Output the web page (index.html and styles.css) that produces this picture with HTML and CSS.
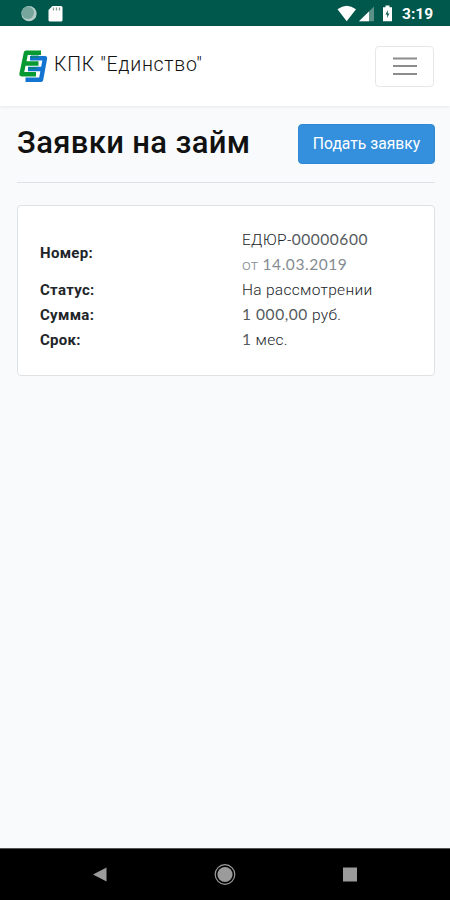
FILE: index.html
```html
<!DOCTYPE html>
<html lang="ru">
<head>
  <meta charset="UTF-8">
  <meta name="viewport" content="width=device-width, initial-scale=1.0">
  <title>КПК "Единство"</title>
  <link rel="stylesheet" href="styles.css">
</head>
<body>
  <div class="status-bar">
    <svg class="status-left" width="44" height="26" viewBox="0 0 44 26">
      <circle cx="9" cy="13.7" r="7.6" fill="#b5cdc8"/>
      <circle cx="7.8" cy="12.8" r="6.2" fill="#76a69c"/>
      <path d="M32.500 6H41q1.500 0 1.500 1.500V20q0 1.500-1.500 1.500H30q-1.500 0-1.500-1.500V10z" fill="#fff"/>
      <path d="M33.500 7.500v3M36.500 7.500v3M39.500 7.500v3" stroke="#8b9c92" stroke-width="1.300"/>
    </svg>
    <svg class="status-right" width="58" height="26" viewBox="0 0 58 26">
      <path d="M0.500 9.300Q9.700 2.300 19 9.300L9.700 21.300z" fill="#fff"/>
      <path d="M37 6.500V21.300H22z" fill="#5b9187"/>
      <path d="M32 11.500V21.300H22z" fill="#fff"/>
      <path d="M48.500 5.500h4v1.800h2.500V21.300H46V7.300h2.500z" fill="#fff"/>
      <path d="M51 10l-2.500 4.500h1.800l-.3 3.500 2.400-4.500h-1.700z" fill="#00574b"/>
    </svg>
    <span class="clock">3:19</span>
  </div>

  <nav class="navbar">
    <a class="brand">
      <svg class="logo" width="30" height="34" viewBox="0 0 30 34">
        <g fill="none" stroke-width="4.400" stroke-linejoin="round">
          <path d="M12 9.200H27L23 30.800H7.500M10 20H25" stroke="#1274d0"/>
          <path d="M23 3.700H8L3.500 25.200H18M6 14.500H20.500" stroke="#079a32"/>
        </g>
        <path d="M13 6.500H21L20.500 9H12.500zM10.500 18H19L18.500 20.500H10z" fill="#087f8c"/>
      </svg>
      <span>КПК "Единство"</span>
    </a>
    <button class="toggler" aria-label="Меню">
      <svg width="24" height="20" viewBox="0 0 24 20">
        <path d="M0 2.500H24M0 10H24M0 18H24" stroke="#8c8c8c" stroke-width="1.800"/>
      </svg>
    </button>
  </nav>

  <main>
    <div class="page-header">
      <h1>Заявки на займ</h1>
      <button class="btn-primary">Подать заявку</button>
    </div>

    <div class="card">
      <dl>
        <dt>Номер:</dt>
        <dd>ЕДЮР-<span class="num">00000600</span><br><span class="muted">от <span class="num">14.03.2019</span></span></dd>
        <dt>Статус:</dt>
        <dd>На рассмотрении</dd>
        <dt>Сумма:</dt>
        <dd><span class="num">1 000,00</span> руб.</dd>
        <dt>Срок:</dt>
        <dd><span class="num">1</span> мес.</dd>
      </dl>
    </div>
  </main>

  <div class="system-nav">
    <svg width="24" height="24" viewBox="0 0 24 24">
      <path d="M5 11.500L18.500 4.500V18.500z" fill="#9b9b9b"/>
    </svg>
    <svg width="24" height="24" viewBox="0 0 24 24">
      <circle cx="12" cy="11.500" r="9.800" fill="none" stroke="#9b9b9b" stroke-width="1.200"/>
      <circle cx="12" cy="11.500" r="7.600" fill="#9b9b9b"/>
    </svg>
    <svg width="24" height="24" viewBox="0 0 24 24">
      <path d="M5 4.500H19V18.500H5z" fill="#9b9b9b"/>
    </svg>
  </div>
</body>
</html>
```

FILE: styles.css
```css
* {
  box-sizing: border-box;
}

body {
  font-family: Roboto, "Liberation Sans", sans-serif;
  font-size: 15.5px;
  line-height: 25px;
  margin: 0;
  min-height: 100vh;
  display: flex;
  flex-direction: column;
  background-color: #f8fafc;
  color: #212529;
}

.status-bar {
  display: flex;
  align-items: center;
  height: 26px;
  padding: 0 17px 0 20px;
  background-color: #00574b;
  color: #fff;
}

.status-right {
  margin-left: auto;
}

.clock {
  width: 31px;
  margin: 3px 0 0 7px;
  font-size: 15.5px;
  font-weight: 700;
  white-space: nowrap;
}

.navbar {
  display: flex;
  align-items: center;
  justify-content: space-between;
  height: 80px;
  padding: 0 16px 0 18px;
  background-color: #fff;
  box-shadow: 0 1px 3px rgba(0, 0, 0, 0.08);
}

.brand {
  display: flex;
  align-items: center;
  gap: 6px;
  font-size: 19.5px;
  font-weight: 300;
  letter-spacing: 0.7px;
  color: #111;
}

.brand span {
  margin-bottom: 4px;
}

button {
  font-family: inherit;
  border-radius: 4px;
}

.toggler {
  display: flex;
  align-items: center;
  justify-content: center;
  width: 59px;
  height: 41px;
  padding: 0;
  background-color: #fff;
  border: 1px solid #e6e7e8;
}

main {
  flex: 1;
  padding: 18px 15px 0 17px;
}

.page-header {
  display: flex;
  align-items: flex-start;
  justify-content: space-between;
  height: 59px;
  border-bottom: 1px solid #dee2e6;
}

h1 {
  margin: 0;
  font-size: 31px;
  font-weight: 500;
  letter-spacing: 0.35px;
  line-height: 38px;
  white-space: nowrap;
  color: #111;
}

.btn-primary {
  width: 137px;
  height: 40px;
  padding: 0 0 2px;
  background-color: #3490dc;
  border: 1px solid #2f89d4;
  color: #fff;
  font-size: 15.7px;
  white-space: nowrap;
}

.card {
  margin-top: 22px;
  height: 171px;
  padding: 22px;
  background-color: #fff;
  border: 1px solid #dfe2e5;
  border-radius: 4px;
}

dl {
  display: grid;
  grid-template-columns: 202px 1fr;
  grid-template-rows: 50px 25px 25px 25px;
  align-items: center;
  margin: 0;
}

dt {
  font-size: 15px;
  font-weight: 700;
  letter-spacing: 0.3px;
}

dd {
  margin: 0;
  font-weight: 300;
  letter-spacing: 0.3px;
}

.num {
  font-family: Lato, sans-serif;
  font-weight: 400;
  letter-spacing: 0.55px;
  line-height: 1;
  color: #555a5e;
}

.muted,
.muted .num {
  color: #858c92;
}

.system-nav {
  display: flex;
  align-items: center;
  justify-content: space-between;
  height: 52px;
  padding: 0 88px;
  background-color: #000;
  border-top: 1px solid #555;
}
```
